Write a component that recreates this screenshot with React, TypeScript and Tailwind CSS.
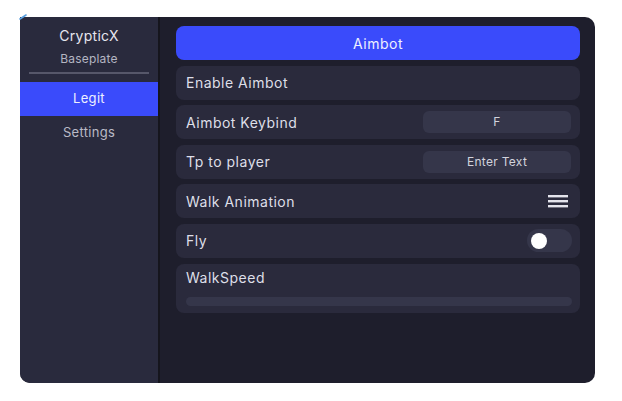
export default function App() {
  const font = { fontFamily: 'Inter, "Noto Sans", sans-serif' };
  return (
    <div className="w-[622px] h-[401px] bg-white pt-[17px] pl-[20px]" style={font}>
      <div className="relative w-[575px] h-[366px] flex rounded-tr-[10px] rounded-b-[10px] bg-[#1e1e2c]">
        {/* corner handle */}
        <svg className="absolute left-[-1px] top-[-3px]" width="9" height="6" viewBox="0 0 9 6">
          <path d="M1 5 L7 1" stroke="#5aa0e0" strokeWidth="1.6" strokeLinecap="round" />
        </svg>

        {/* Sidebar */}
        <div className="w-[140px] bg-[#292a3d] border-r-2 border-[#15151d] rounded-bl-[10px] flex flex-col items-stretch">
          <div className="pt-[10px] text-center text-[14px] tracking-[0.3px] text-[#e6e6ee] leading-[18px]">CrypticX</div>
          <div className="pt-[6px] text-center text-[12px] tracking-[0.2px] text-[#b4b5c2] leading-[16px]">Baseplate</div>
          <div className="mx-[9px] mt-[5px] h-[2px] bg-[#56576a]" />
          <div className="mt-[8px] h-[34px] bg-[#3a4bfb] flex items-center justify-center text-[13px] tracking-[0.3px] text-[#eef0ff]">
            Legit
          </div>
          <div className="h-[34px] flex items-center justify-center text-[13px] tracking-[0.3px] text-[#b9bac6]">Settings</div>
        </div>

        {/* Main */}
        <div className="flex-1 pl-[16px] pr-[15px] pt-[9px] flex flex-col gap-[5.6px] text-[14px] tracking-[0.5px]">
          <div className="h-[34px] rounded-[8px] bg-[#3a4bfb] flex items-center justify-center text-[#eef0ff]">
            Aimbot
          </div>
          <div className="h-[34px] rounded-[8px] bg-[#2a2a3c] flex items-center px-[10px] text-[#dedfe8]">
            Enable Aimbot
          </div>
          <div className="h-[34px] rounded-[8px] bg-[#2a2a3c] flex items-center justify-between pl-[10px] pr-[9px] text-[#dedfe8]">
            <span>Aimbot Keybind</span>
            <div className="w-[148px] h-[22px] rounded-[6px] bg-[#35364a] flex items-center justify-center text-[12px] tracking-[0.3px] text-[#d2d3dd]">
              F
            </div>
          </div>
          <div className="h-[34px] rounded-[8px] bg-[#2a2a3c] flex items-center justify-between pl-[10px] pr-[9px] text-[#dedfe8]">
            <span>Tp to player</span>
            <div className="w-[148px] h-[22px] rounded-[6px] bg-[#35364a] flex items-center justify-center text-[12px] tracking-[0.3px] text-[#d2d3dd]">
              Enter Text
            </div>
          </div>
          <div className="h-[34px] rounded-[8px] bg-[#2a2a3c] flex items-center justify-between pl-[10px] pr-[12px] text-[#dedfe8]">
            <span>Walk Animation</span>
            <svg width="20" height="16" viewBox="0 0 20 16">
              <rect x="0" y="2" width="20" height="2.4" fill="#e4e4ec" />
              <rect x="0" y="7" width="20" height="2.4" fill="#e4e4ec" />
              <rect x="0" y="12" width="20" height="2.4" fill="#e4e4ec" />
            </svg>
          </div>
          <div className="h-[34px] rounded-[8px] bg-[#2a2a3c] flex items-center justify-between pl-[10px] pr-[8px] text-[#dedfe8]">
            <span>Fly</span>
            <div className="w-[45px] h-[23px] rounded-full bg-[#35364a] flex items-center pl-[4px]">
              <div className="w-[16px] h-[16px] rounded-full bg-white" />
            </div>
          </div>
          <div className="h-[49px] rounded-[8px] bg-[#2a2a3c] flex flex-col px-[10px] pt-[5px] pr-[8px]">
            <span className="text-[#dedfe8] leading-[18px]">WalkSpeed</span>
            <div className="mt-[10px] h-[9px] rounded-full bg-[#35364a]" />
          </div>
        </div>
      </div>
    </div>
  );
}
